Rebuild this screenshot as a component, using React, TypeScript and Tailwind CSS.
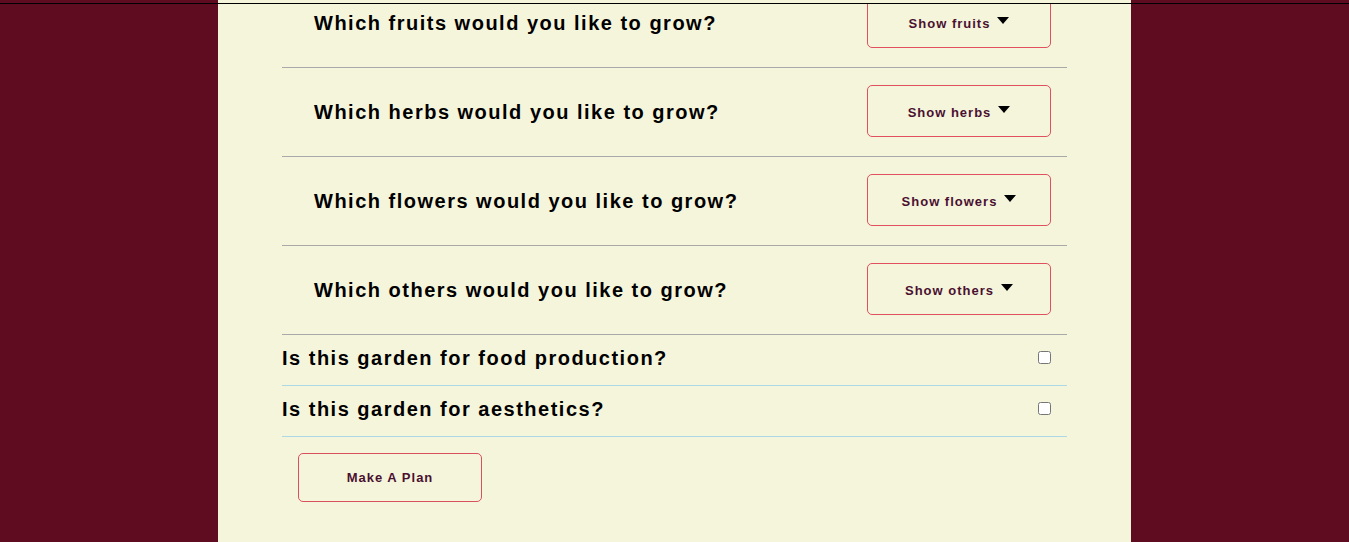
import React from "react";

const Caret = () => (
  <svg width="12" height="7" viewBox="0 0 12 7" className="mt-[1px] shrink-0">
    <path d="M0 0 L12 0 L6 7 Z" fill="#000" />
  </svg>
);

const DropRow = ({ q, label }: { q: string; label: string }) => (
  <div className="flex h-[89px] items-center justify-between border-b border-[#a9a9a9] pl-8 pr-4">
    <h2 className="text-[20px] font-bold leading-6 tracking-[1.5px] text-black">{q}</h2>
    <button className="mb-[2px] flex h-[52px] w-[184px] items-center justify-center rounded-[5px] border border-[#e0505e] bg-transparent">
      <span className="flex items-start gap-[7px] pt-[3px]">
        <span className="text-[13px] font-bold leading-4 tracking-[1px] text-[#4a1030]">{label}</span>
        <Caret />
      </span>
    </button>
  </div>
);

const CheckRow = ({ q }: { q: string }) => (
  <div className="flex h-[51px] items-center justify-between border-b border-[#add8e6] pb-[5px] pr-4">
    <h2 className="text-[20px] font-bold leading-6 tracking-[1.5px] text-black">{q}</h2>
    <input type="checkbox" className="h-[13px] w-[13px]" />
  </div>
);

export default function App() {
  return (
    <div
      className="relative min-h-[542px] bg-[#5f0c21]"
      style={{ fontFamily: '"Liberation Sans", Arial, sans-serif' }}
    >
      <div className="fixed inset-x-0 top-0 z-10 flex h-[4px] border-b border-black">
        <div className="w-[218px] bg-[#5f0c21]" />
        <div className="w-[913px] bg-[#f5f5dc]" />
        <div className="flex-1 bg-[#5f0c21]" />
      </div>
      <div className="ml-[218px] min-h-[542px] w-[913px] overflow-hidden bg-[#f5f5dc] px-16">
        <div className="-mt-[21px]">
          <DropRow q="Which fruits would you like to grow?" label="Show fruits" />
          <DropRow q="Which herbs would you like to grow?" label="Show herbs" />
          <DropRow q="Which flowers would you like to grow?" label="Show flowers" />
          <DropRow q="Which others would you like to grow?" label="Show others" />
          <CheckRow q="Is this garden for food production?" />
          <CheckRow q="Is this garden for aesthetics?" />
          <div className="pl-4 pt-4">
            <button className="flex h-[49px] w-[184px] items-center justify-center rounded-[5px] border border-[#d9505e] bg-transparent">
              <span className="pt-[1px] text-[13px] font-bold leading-4 tracking-[1px] text-[#4a1030]">
                Make A Plan
              </span>
            </button>
          </div>
        </div>
      </div>
    </div>
  );
}
